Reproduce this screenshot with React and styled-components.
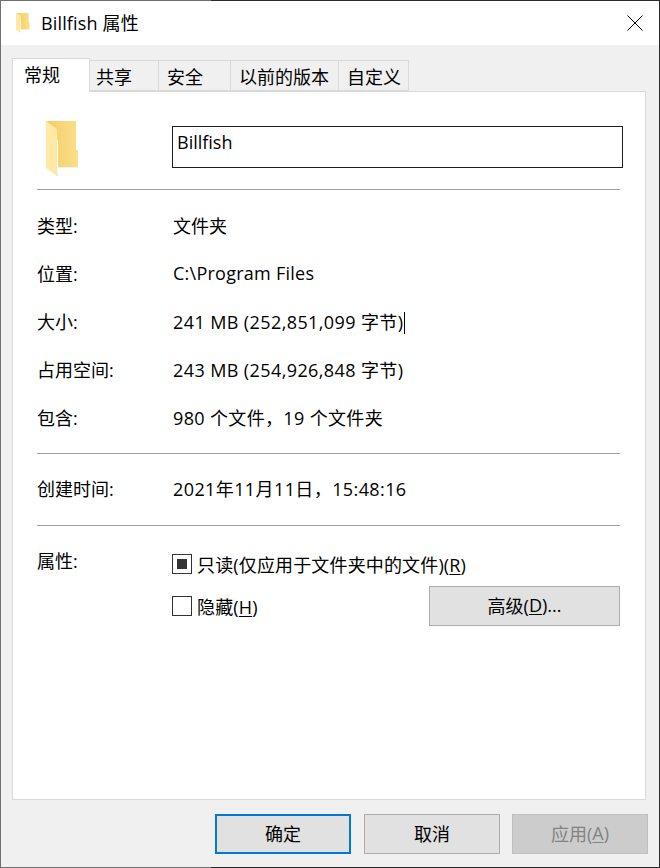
import React from "react";
import styled, { createGlobalStyle } from "styled-components";

const GlobalStyle = createGlobalStyle`
  html, body {
    margin: 0;
    padding: 0;
    background: #f0f0f0;
  }
  * {
    box-sizing: border-box;
  }
`;

const Dialog = styled.div`
  width: 660px;
  height: 868px;
  display: flex;
  flex-direction: column;
  background: #f0f0f0;
  color: #000;
  font-family: "Open Sans", "Noto Sans CJK SC", sans-serif;
  font-size: 18px;
  border: 1px solid;
  border-image: linear-gradient(to right, #707070 0, #707070 211px, #2b2b2b 211px) 1;
  overflow: hidden;
`;

const TitleBar = styled.div`
  height: 44px;
  flex: none;
  display: flex;
  align-items: center;
  gap: 11px;
  padding: 0 16px 0 15px;
  background: #fff;
`;

const Title = styled.div`
  flex: 1;
  line-height: 24px;
  letter-spacing: 0.15px;
`;

const Tabs = styled.div`
  display: flex;
  align-items: flex-end;
  height: 46px;
  flex: none;
  padding-left: 11px;
  position: relative;
  z-index: 1;
`;

const Tab = styled.div`
  width: ${(p) => p.$w}px;
  height: ${(p) => (p.$active ? 34 : 31)}px;
  margin-left: ${(p) => (p.$active ? 0 : -1)}px;
  margin-bottom: ${(p) => (p.$active ? -1 : 0)}px;
  padding-left: ${(p) => p.$pad}px;
  line-height: 32px;
  white-space: nowrap;
  background: ${(p) => (p.$active ? "#fff" : "#f0f0f0")};
  border: 1px solid #d9d9d9;
  border-bottom: ${(p) => (p.$active ? "none" : "1px solid #d9d9d9")};
`;

const Panel = styled.div`
  margin-left: 11px;
  width: 634px;
  height: 709px;
  flex: none;
  background: #fff;
  border: 1px solid #d9d9d9;
  padding: 0 25px 0 24px;
`;

const Header = styled.div`
  height: 98px;
  display: flex;
  align-items: flex-start;
  border-bottom: 1px solid #a0a0a0;
`;

const IconCell = styled.div`
  width: 135px;
  flex: none;
  padding: 29px 0 0 9px;
`;

const NameBox = styled.div`
  width: 451px;
  height: 42px;
  flex: none;
  margin-top: 34px;
  padding: 0 4px;
  line-height: 30px;
  border: 1px solid #1f1f1f;
`;

const Group = styled.div`
  padding: ${(p) => p.$pad};
  border-bottom: ${(p) => (p.$last ? "none" : "1px solid #a0a0a0")};
`;

const Row = styled.div`
  display: flex;
  align-items: center;
  height: 48px;
  padding-bottom: 2px;
  white-space: nowrap;
`;

const Label = styled.div`
  width: 136px;
  flex: none;
`;

const Value = styled.div`
  letter-spacing: ${(p) => p.$track || 0}px;
`;

const Caret = styled.span`
  display: inline-block;
  width: 1px;
  height: 22px;
  margin-left: 1px;
  background: #000;
  vertical-align: -5px;
`;

const Attrs = styled.div`
  display: flex;
  padding-top: 28px;
`;

const AttrLabel = styled.div`
  width: 135px;
  flex: none;
  line-height: 14px;
`;

const AttrList = styled.div`
  flex: 1;
  display: flex;
  flex-direction: column;
  gap: 22px;
`;

const CheckRow = styled.div`
  display: flex;
  align-items: center;
  justify-content: space-between;
  height: 20px;
`;

const CheckLabel = styled.div`
  display: flex;
  align-items: center;
  gap: 5px;
  white-space: nowrap;
  letter-spacing: 0.15px;
`;

const Box = styled.span`
  width: 20px;
  height: 20px;
  flex: none;
  display: flex;
  align-items: center;
  justify-content: center;
  background: #fff;
  border: 1px solid #333;
  &::after {
    content: "";
    display: ${(p) => (p.$mixed ? "block" : "none")};
    width: 10px;
    height: 10px;
    background: #333;
  }
`;

const Key = styled.span`
  text-decoration: underline;
  text-underline-offset: 2px;
  text-decoration-thickness: 1px;
`;

const Button = styled.div`
  width: ${(p) => p.$w || 136}px;
  height: 40px;
  flex: none;
  display: flex;
  align-items: center;
  justify-content: center;
  padding-bottom: 2px;
  margin-right: ${(p) => (p.$primary ? 1 : 0)}px;
  background: ${(p) => (p.$disabled ? "#cccccc" : "#e1e1e1")};
  color: ${(p) => (p.$disabled ? "#838383" : "#000")};
  border: ${(p) => (p.$primary ? "2px solid #0078d7" : p.$disabled ? "1px solid #bfbfbf" : "1px solid #adadad")};
  white-space: nowrap;
`;

const Footer = styled.div`
  flex: 1;
  display: flex;
  justify-content: flex-end;
  gap: 12px;
  padding: 14px 11px 0 0;
`;

const CloseIcon = () => (
  <svg width="16" height="16" viewBox="0 0 16 16" fill="none" stroke="#000" strokeWidth="1">
    <path d="M0.5 0.5 L15.5 15.5 M15.5 0.5 L0.5 15.5" />
  </svg>
);

const FolderIcon = ({ w = 33, h = 56, id }) => (
  <svg width={w} height={h} viewBox="0 0 33 56" preserveAspectRatio="none">
    <defs>
      <linearGradient id={id} x1="0" x2="1" y1="0" y2="0">
        <stop offset="0" stopColor="#f3cc66" />
        <stop offset="1" stopColor="#fbdf8a" />
      </linearGradient>
    </defs>
    <path d="M0 0 H30 V29 H32 V46 H12 V20 Z" fill={`url(#${id})`} />
    <path d="M0 0 L11 8 V55 L0 47 Z" fill="#ffe9a5" />
    <path d="M11 46 H33 V47 H11 Z" fill="#f2f2f2" />
    <path d="M11 53 H12 V55 H11 Z" fill="#e4e4e4" />
  </svg>
);

const rows = [
  { label: "类型:", value: "文件夹" },
  { label: "位置:", value: "C:\\Program Files", track: 0.25 },
  { label: "大小:", value: "241 MB (252,851,099 字节)", track: 0.4, caret: true },
  { label: "占用空间:", value: "243 MB (254,926,848 字节)", track: 0.4 },
  { label: "包含:", value: "980 个文件，19 个文件夹", track: 0.35 },
];

export default function App() {
  return (
    <>
      <GlobalStyle />
      <Dialog>
        <TitleBar>
          <FolderIcon w={14} h={20} id="folderSmall" />
          <Title>Billfish 属性</Title>
          <CloseIcon />
        </TitleBar>
        <Tabs>
          <Tab $active $w={78} $pad={11}>常规</Tab>
          <Tab $w={70} $pad={6}>共享</Tab>
          <Tab $w={73} $pad={8}>安全</Tab>
          <Tab $w={109} $pad={8}>以前的版本</Tab>
          <Tab $w={71} $pad={8}>自定义</Tab>
        </Tabs>
        <Panel>
          <Header>
            <IconCell>
              <FolderIcon id="folderLarge" />
            </IconCell>
            <NameBox>Billfish</NameBox>
          </Header>
          <Group $pad="12px 0 11px">
            {rows.map((r) => (
              <Row key={r.label}>
                <Label>{r.label}</Label>
                <Value $track={r.track}>
                  {r.value}
                  {r.caret && <Caret />}
                </Value>
              </Row>
            ))}
          </Group>
          <Group $pad="11px 0 12px">
            <Row>
              <Label>创建时间:</Label>
              <Value $track={0.4}>2021年11月11日，15:48:16</Value>
            </Row>
          </Group>
          <Group $last $pad="0">
            <Attrs>
              <AttrLabel>属性:</AttrLabel>
              <AttrList>
                <CheckRow>
                  <CheckLabel>
                    <Box $mixed />
                    <span>只读(仅应用于文件夹中的文件)(<Key>R</Key>)</span>
                  </CheckLabel>
                </CheckRow>
                <CheckRow>
                  <CheckLabel>
                    <Box />
                    <span>隐藏(<Key>H</Key>)</span>
                  </CheckLabel>
                  <Button $w={191}>高级(<Key>D</Key>)...</Button>
                </CheckRow>
              </AttrList>
            </Attrs>
          </Group>
        </Panel>
        <Footer>
          <Button $primary>确定</Button>
          <Button>取消</Button>
          <Button $disabled>应用(<Key>A</Key>)</Button>
        </Footer>
      </Dialog>
    </>
  );
}
